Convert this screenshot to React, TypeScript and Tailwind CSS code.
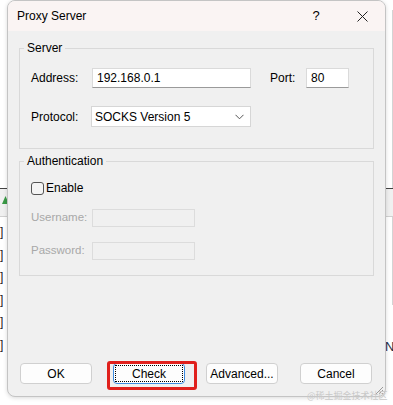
import React from 'react';

const Field: React.FC<{ w: string; value?: string; disabled?: boolean; h?: string }> = ({ w, value, disabled, h = 'h-[20px]' }) => (
  <div
    className={`${w} ${h} flex items-center px-[4px] text-[12px] text-black ${
      disabled ? 'border border-[#dcdcdc] bg-[#f0f0f0]' : 'border border-[#dadada] border-b-[#9a9a9a] bg-white'
    }`}
  >
    {value}
  </div>
);

const Btn: React.FC<{ label: string; focused?: boolean }> = ({ label, focused }) => (
  <div
    className={`relative flex h-[21px] w-[72px] items-center justify-center rounded-[4px] text-[12px] text-black ${
      focused ? 'border border-[#3c8be0] bg-[#fdfdfd]' : 'border border-[#d0d0d0] bg-[#fdfdfd]'
    }`}
  >
    {focused && <div className="pointer-events-none absolute inset-[1px] border border-dotted border-black" />}
    {label}
  </div>
);

export default function App() {
  return (
    <div className="relative h-[405px] w-[393px] overflow-hidden bg-white font-['Liberation_Sans',Arial,sans-serif]">
      {/* app behind the dialog, left edge */}
      <div className="absolute left-0 top-[188px] h-[29px] w-[8px] border-t border-b border-t-[#444] border-b-[#d0d0d0] bg-[#f0f0f0]">
        <svg className="absolute left-[2px] top-[7px]" width="7" height="8" viewBox="0 0 7 8">
          <polygon points="3.5,0 7,8 0,8" fill="#3a9a46" />
        </svg>
      </div>
      <div className="absolute left-0 top-[224px] flex flex-col gap-[6.6px] text-[12px] leading-[16px] text-[#222]">
        {[0, 1, 2, 3, 4, 5].map((i) => (
          <span key={i}>]</span>
        ))}
      </div>
      {/* app behind the dialog, right edge */}
      <div className="absolute right-0 top-[10px] h-[295px] w-px bg-[#d4d4d4]" />
      <div className="absolute right-0 top-[188px] h-[29px] w-[8px] border-t border-b border-t-[#444] border-b-[#d0d0d0] bg-[#f0f0f0]" />
      <span className="absolute left-[385px] top-[337px] text-[13px] text-[#1e2a44]">N</span>

      {/* dialog window */}
      <div className="pl-[7px]">
        <div className="relative z-10 flex h-[397px] w-[379px] flex-col overflow-hidden rounded-[8px] border border-[#c4c4c4] bg-[#f0f0f0] shadow-[0_1px_4px_rgba(0,0,0,0.15)]">
          {/* title bar */}
          <div className="flex h-[30px] shrink-0 items-center bg-[#faf4f3] pl-[9px] text-[11px] text-black">
            <span className="flex-1 text-[12px]">Proxy Server</span>
            <div className="flex h-full w-[46px] items-center justify-center text-[13px]">?</div>
            <div className="flex h-full w-[46px] items-center justify-center">
              <svg width="11" height="11" viewBox="0 0 11 11">
                <path d="M0.5 0.5L10.5 10.5M10.5 0.5L0.5 10.5" stroke="#222" strokeWidth="1" />
              </svg>
            </div>
          </div>

          {/* body */}
          <div className="flex flex-1 flex-col px-[11px] text-[12px] text-black">
            <fieldset className="mt-[10px] h-[108px] border border-[#d9d9d9] pl-[11px] pr-[8px]">
              <legend className="-ml-[7px] px-[3px] leading-[15px]">Server</legend>
              <div className="mt-[12px] flex items-center">
                <span className="w-[61px]">Address:</span>
                <Field w="w-[159px]" value="192.168.0.1" />
                <span className="ml-[19px] w-[36px]">Port:</span>
                <Field w="w-[43px]" value="80" />
              </div>
              <div className="mt-[18px] flex items-center">
                <span className="w-[60px]">Protocol:</span>
                <div className="flex h-[21px] w-[160px] items-center justify-between border border-[#d6d6d6] bg-white pl-[3px] pr-[6px]">
                  <span>SOCKS Version 5</span>
                  <svg width="9" height="6" viewBox="0 0 9 6">
                    <path d="M0.5 0.8L4.5 4.8L8.5 0.8" fill="none" stroke="#555" strokeWidth="1" />
                  </svg>
                </div>
              </div>
            </fieldset>

            <fieldset className="mt-[5px] h-[122px] border border-[#d9d9d9] pl-[11px] pr-[8px]">
              <legend className="-ml-[7px] px-[3px] leading-[15px]">Authentication</legend>
              <div className="mt-[10px] flex items-center">
                <div className="h-[13px] w-[13px] rounded-[3px] border border-[#555] bg-[#f4f4f4]" />
                <span className="ml-[2px]">Enable</span>
              </div>
              <div className="mt-[12px] flex items-center text-[11.5px] text-[#a8a8a8]">
                <span className="w-[61px]">Username:</span>
                <Field w="w-[103px]" h="h-[18px]" disabled />
              </div>
              <div className="mt-[15px] flex items-center text-[11.5px] text-[#a8a8a8]">
                <span className="w-[61px]">Password:</span>
                <Field w="w-[103px]" h="h-[18px]" disabled />
              </div>
            </fieldset>

            <div className="mt-auto mb-[12px] flex gap-[21px] pl-[1px]">
              <Btn label="OK" />
              <div className="relative">
                <Btn label="Check" focused />
                <div className="pointer-events-none absolute left-[-6px] top-[-2px] h-[29px] w-[90px] rounded-[3px] border-[3px] border-[#e0201c]" />
              </div>
              <Btn label="Advanced..." />
              <div className="ml-[1px]">
                <Btn label="Cancel" />
              </div>
            </div>
          </div>

          {/* resize grip */}
          <svg className="absolute bottom-[1px] right-[1px]" width="11" height="11" viewBox="0 0 11 11">
            <path d="M10 3L3 10M10 6L6 10M10 9L9 10" stroke="#9a9a9a" strokeWidth="1" />
          </svg>
        </div>
      </div>

      {/* watermark */}
      <span className="absolute left-[307px] top-[390px] z-20 whitespace-nowrap font-['Noto_Sans_CJK_SC',sans-serif] text-[9px] leading-[11px] text-[#c8c8c8]">
        @稀土掘金技术社区
      </span>
    </div>
  );
}
